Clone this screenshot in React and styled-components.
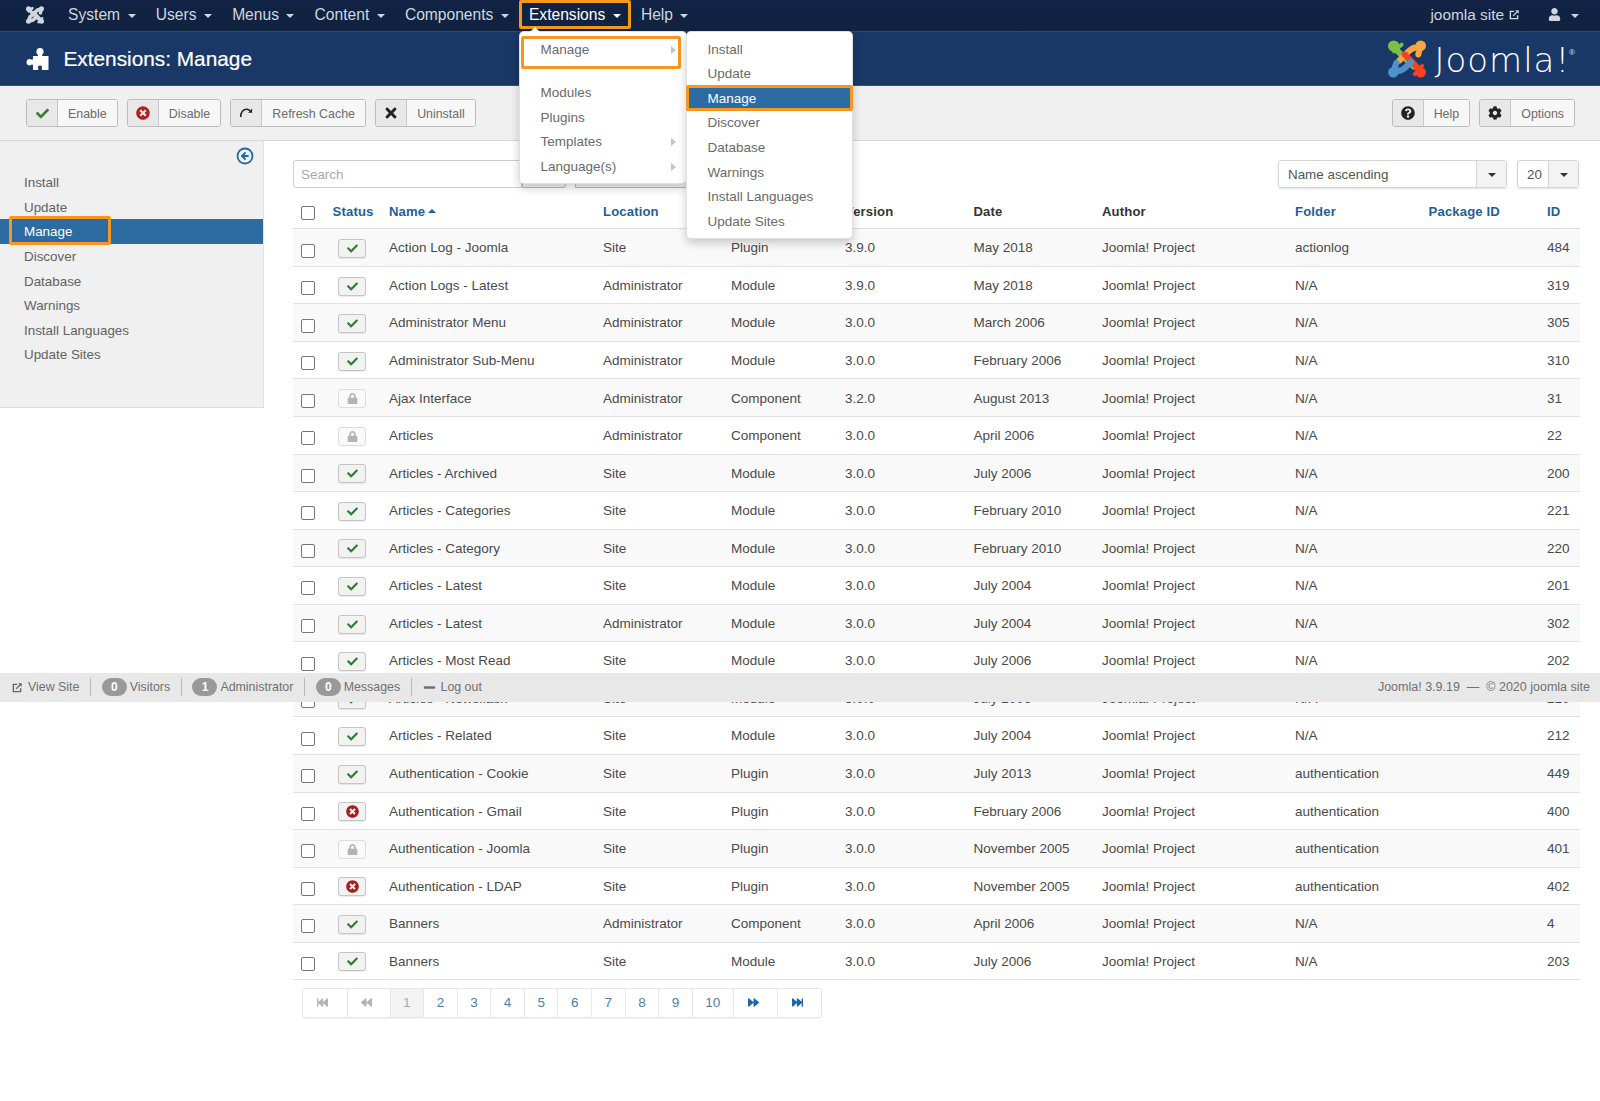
import React from "react";
import styled, { createGlobalStyle } from "styled-components";
import {
  FaCheck, FaTimesCircle, FaTimes, FaQuestionCircle, FaCog, FaUser, FaLock,
  FaFastBackward, FaBackward, FaForward, FaFastForward, FaMinus,
} from "react-icons/fa";
import { CircleArrowLeft } from "lucide-react";

const Global = createGlobalStyle`
  html, body { margin: 0; padding: 0; background: #fff; overflow: hidden; }
  body { font-family: "Liberation Sans", Arial, sans-serif; color: #4a4a4a; }
  * { box-sizing: border-box; }
`;

const ORANGE = "#f7981d";
const BLUE = "#2d6ca2";

const Page = styled.div`
  position: relative;
  width: 1600px;
  height: 1101px;
  overflow: hidden;
`;

/* ---------- top bar ---------- */
const TopBar = styled.nav`
  height: 31px;
  display: flex;
  align-items: flex-start;
  padding-left: 26px;
  background: linear-gradient(#112245, #10233f);
  color: #d0d6df;
  font-size: 15.6px;
`;
const TopLogo = styled.div`
  width: 18px;
  height: 29px;
  margin-right: 14px;
  display: flex;
  align-items: center;
`;
const TopItem = styled.div`
  height: 29px;
  display: flex;
  align-items: center;
  padding: 0 10.08px;
  color: ${(p) => (p.$on ? "#fff" : "#d0d6df")};
  box-shadow: ${(p) => (p.$on ? `inset 0 0 0 3px ${ORANGE}` : "none")};
  border-radius: 2px;
`;
const Caret = styled.span`
  display: inline-block;
  margin-left: ${(p) => p.$gap ?? 7.5}px;
  margin-top: 2px;
  border-left: 4px solid transparent;
  border-right: 4px solid transparent;
  border-top: 4px solid ${(p) => p.$color || "#d0d6df"};
`;
const TopRight = styled.div`
  margin-left: auto;
  height: 29px;
  display: flex;
  align-items: center;
  padding-right: 21px;
  font-size: 15.4px;
  svg { display: block; }
`;
const SiteLink = styled.span`
  display: flex;
  align-items: center;
  gap: 5px;
  margin-right: 28px;
`;

/* ---------- title bar ---------- */
const TitleBar = styled.header`
  height: 55px;
  display: flex;
  align-items: center;
  padding: 0 25px 0 26px;
  background: #1a3867;
  border-top: 1px solid #2d4a75;
  border-bottom: 1px solid #33507c;
  color: #fff;
`;
const Title = styled.h1`
  margin: 0 0 0 14.5px;
  font-size: 20.8px;
  font-weight: 400;
  -webkit-text-stroke: 0.2px #fff;
`;
const Brand = styled.div`
  margin-left: auto;
  display: flex;
  align-items: center;
`;
const Wordmark = styled.span`
  margin: 3px 0 0 8px;
  font-family: "DejaVu Sans", "Lato", sans-serif;
  font-weight: 200;
  font-size: 34px;
  letter-spacing: 1px;
  line-height: 1;
  color: #fff;
`;
const Registered = styled.sup`
  font-size: 8px;
  align-self: flex-start;
  margin: 8px 0 0 -1px;
  color: #dfe6ee;
`;

/* ---------- toolbar ---------- */
const Toolbar = styled.div`
  height: 55px;
  display: flex;
  align-items: flex-start;
  gap: 9.2px;
  padding: 13px 25px 0 26px;
  background: #f0f0f0;
  border-bottom: 1px solid #d8d8d8;
`;
const ToolBtn = styled.div`
  display: flex;
  height: 28px;
  border: 1px solid #bcbcbc;
  border-radius: 3px;
  overflow: hidden;
  margin-left: ${(p) => (p.$push ? "auto" : "0")};
`;
const ToolIcon = styled.span`
  width: 31px;
  display: flex;
  align-items: center;
  justify-content: center;
  background: #e8e8e8;
  border-right: 1px solid #c8c8c8;
  color: ${(p) => p.$color || "#222"};
`;
const ToolText = styled.span`
  display: flex;
  align-items: center;
  padding: 1px 10px 0;
  background: #f7f7f7;
  color: #6c6c6c;
  font-size: 12.4px;
`;

/* ---------- main ---------- */
const Main = styled.div`
  display: flex;
  align-items: flex-start;
`;
const Sidebar = styled.aside`
  position: relative;
  width: 264px;
  height: 267px;
  flex: none;
  background: #f0f0f0;
  border-right: 1px solid #e2e2e2;
  border-bottom: 1px solid #dcdcdc;
  padding-top: 29.3px;
`;
const Collapse = styled.span`
  position: absolute;
  top: 6px;
  right: 9px;
  color: #1f6aa5;
  svg { display: block; }
`;
const SideItem = styled.div`
  height: 24.6px;
  line-height: 26px;
  padding-left: 24px;
  font-size: 13.4px;
  color: ${(p) => (p.$on ? "#fff" : "#626262")};
  background: ${(p) => (p.$on ? BLUE : "transparent")};
`;
const SideMark = styled.span`
  position: absolute;
  left: 9px;
  top: 75px;
  width: 102px;
  height: 28.5px;
  border: 3px solid ${ORANGE};
  border-radius: 2px;
`;
const Content = styled.main`
  flex: 1;
  padding: 19px 20px 0 29px;
`;
const Filters = styled.div`
  display: flex;
  height: 28px;
  margin-bottom: 6px;
  padding-right: 1px;
`;
const SearchBox = styled.div`
  width: 229px;
  border: 1px solid #ccc;
  border-radius: 3px 0 0 3px;
  padding-left: 7px;
  line-height: 28px;
  font-size: 13.4px;
  color: #a9a9a9;
`;
const GhostBtn = styled.div`
  width: ${(p) => p.$w}px;
  margin-left: ${(p) => p.$gap ?? 0}px;
  border: 1px solid #bbb;
  border-radius: 0 3px 3px 0;
  background: #f5f5f5;
`;
const SelectBox = styled.div`
  display: flex;
  width: ${(p) => p.$w}px;
  margin-left: ${(p) => (p.$auto ? "auto" : "10px")};
  border: 1px solid #d4d4d4;
  border-radius: 3px;
  box-shadow: 0 1px 2px rgba(0,0,0,.12);
  font-size: 13.4px;
  color: #555;
`;
const SelectValue = styled.span`
  flex: 1;
  padding-left: ${(p) => p.$pad}px;
  line-height: 28px;
`;
const SelectArrow = styled.span`
  width: 30px;
  display: flex;
  align-items: center;
  justify-content: center;
  background: #f3f3f3;
  border-left: 1px solid #d4d4d4;
`;

const COLS = "39.6px 56.4px 214px 128px 114px 128.5px 128.5px 193px 133.6px 118.4px 33px";
const HeadRow = styled.div`
  display: grid;
  grid-template-columns: ${COLS};
  height: 35.3px;
  align-items: center;
  border-bottom: 1px solid #ddd;
  font-size: 13.1px;
  font-weight: 700;
  letter-spacing: .15px;
  color: #333;
`;
const HeadLink = styled.span`
  color: #1f5f97;
`;
const SortUp = styled.span`
  display: inline-block;
  margin-left: 3px;
  vertical-align: 3px;
  border-left: 4px solid transparent;
  border-right: 4px solid transparent;
  border-bottom: 4px solid #1f5f97;
`;
const Row = styled.div`
  display: grid;
  grid-template-columns: ${COLS};
  height: 37.55px;
  align-items: center;
  border-bottom: 1px solid #e2e2e2;
  background: ${(p) => (p.$odd ? "#f9f9f9" : "#fff")};
  font-size: 13.5px;
  color: #4a4a4a;
`;
const Cell = styled.span`
  padding-top: 0.5px;
`;
const Check = styled.input.attrs({ type: "checkbox", readOnly: true })`
  appearance: none;
  display: block;
  width: 14px;
  height: 14px;
  margin: ${(p) => (p.$head ? "3px" : "6px")} 0 0 8px;
  border: 1px solid #767676;
  border-radius: 2px;
  background: #fff;
`;
const Status = styled.span`
  width: 28px;
  height: 19px;
  margin: 2px 0 0 5.5px;
  display: flex;
  align-items: center;
  justify-content: center;
  border: 1px solid ${(p) => (p.$kind === "lock" ? "#ddd" : "#c4c4c4")};
  border-radius: 3px;
  background: ${(p) => (p.$kind === "lock" ? "#fafafa" : "#f2f2f2")};
  box-shadow: ${(p) => (p.$kind === "lock" ? "none" : "0 1px 1px rgba(0,0,0,.08)")};
  color: ${(p) => ({ ok: "#2f7d32", off: "#a51f1f", lock: "#b4b4b4" }[p.$kind])};
`;

/* ---------- pagination ---------- */
const Pager = styled.div`
  display: inline-flex;
  height: 30px;
  margin: 7.5px 0 0 9px;
  border: 1px solid #e6e6e6;
  border-radius: 3px;
  box-shadow: 0 1px 2px rgba(0,0,0,.06);
`;
const PageCell = styled.span`
  min-width: 33.6px;
  padding: 0 12.4px;
  display: flex;
  align-items: center;
  justify-content: center;
  border-left: 1px solid #e8e8e8;
  background: ${(p) => (p.$on ? "#f3f3f3" : "#fff")};
  color: ${(p) => (p.$dim ? "#a8a8a8" : "#4a80b0")};
  font-size: 13.5px;
`;
const PageArrow = styled.span`
  width: ${(p) => p.$w}px;
  padding-right: 4px;
  display: flex;
  align-items: center;
  justify-content: center;
  border-left: ${(p) => (p.$first ? "0" : "1px solid #e8e8e8")};
  color: ${(p) => (p.$dim ? "#b4b4b4" : "#1f66a6")};
`;

/* ---------- footer status ---------- */
const StatusBar = styled.footer`
  position: absolute;
  left: 0;
  right: 0;
  top: 673px;
  height: 28.5px;
  display: flex;
  align-items: center;
  padding: 0 10px;
  background: #e8e8e8;
  font-size: 12.4px;
  color: #707070;
`;
const FootItem = styled.span`
  display: flex;
  align-items: center;
  height: 18px;
  gap: ${(p) => p.$gap ?? 2.9}px;
  padding: 0 10.7px 0 ${(p) => (p.$first ? 1.5 : 10.7)}px;
  border-right: ${(p) => (p.$last ? "0" : "1px solid #bbb")};
`;
const Badge = styled.span`
  width: 25px;
  height: 18px;
  border-radius: 9px;
  background: #999;
  color: #fff;
  font-weight: 700;
  font-size: 12px;
  text-align: center;
  line-height: 18px;
`;
const FootRight = styled.span`
  margin-left: auto;
  font-size: 12.5px;
`;

/* ---------- dropdown menus ---------- */
const Menu = styled.div`
  position: absolute;
  top: 31px;
  left: ${(p) => p.$left}px;
  width: ${(p) => p.$w}px;
  padding: 5.7px 0 3.7px;
  background: #fff;
  border: 1px solid rgba(0,0,0,.12);
  border-radius: 5px;
  box-shadow: 0 4px 10px rgba(0,0,0,.2);
  font-size: 13.5px;
  color: #666;
  z-index: ${(p) => p.$z ?? 5};
`;
const MenuNotch = styled.span`
  position: absolute;
  left: 9px;
  top: -5px;
  border-left: 6px solid transparent;
  border-right: 6px solid transparent;
  border-bottom: 6px solid #fff;
`;
const MenuItem = styled.div`
  position: relative;
  height: 24.6px;
  line-height: 24.6px;
  padding-left: 20.5px;
  margin-bottom: ${(p) => (p.$sep ? 19 : 0)}px;
  color: ${(p) => (p.$on ? "#fff" : "#6a6a6a")};
  background: ${(p) => (p.$on ? BLUE : "transparent")};
`;
const SubArrow = styled.span`
  position: absolute;
  right: 10px;
  top: 8px;
  border-top: 4.5px solid transparent;
  border-bottom: 4.5px solid transparent;
  border-left: 5px solid #c4c4c4;
`;
const MenuMark = styled.span`
  position: absolute;
  left: ${(p) => p.$l}px;
  right: ${(p) => p.$r}px;
  top: ${(p) => p.$t}px;
  bottom: ${(p) => p.$b}px;
  border: 3px solid ${ORANGE};
  border-radius: 2px;
`;

/* ---------- drawings ---------- */
function JoomlaMark({ size, mono }) {
  const c = mono ? ["#d0d6df", "#d0d6df", "#d0d6df", "#d0d6df"] : ["#7ac143", "#f9a541", "#f44321", "#5091cd"];
  const w = mono ? 20 : 16;
  return (
    <svg width={size} height={size} viewBox="0 0 100 100" fill="none" strokeWidth={w} strokeLinecap="round" strokeLinejoin="round">
      <circle cx="15" cy="16" r="15" fill={c[0]} />
      <path d="M18 22 L68 70" stroke={c[0]} />
      <path d="M16 30 L36 12" stroke={c[0]} strokeWidth={w - 6} />
      <circle cx="86" cy="15" r="14" fill={c[1]} />
      <path d="M84 18 L80 38 M82 22 C70 16 62 22 54 30 L30 54" stroke={c[1]} />
      <circle cx="86" cy="85" r="14" fill={c[2]} />
      <path d="M84 80 L44 38" stroke={c[2]} />
      <path d="M90 68 L70 90" stroke={c[2]} strokeWidth={w - 6} />
      <circle cx="14" cy="85" r="14" fill={c[3]} />
      <path d="M18 80 C30 84 38 80 46 72 L60 58 M16 78 L22 60" stroke={c[3]} />
    </svg>
  );
}
const PuzzleIcon = () => (
  <svg width="23" height="24" viewBox="0 0 23 24" fill="#fff">
    <path d="M7 9 H11 C12 9 12.2 8.2 11.6 7.4 C10.6 6.2 10.4 5.4 10.4 4.4 C10.4 2.2 12 1 14 1 C16 1 17.6 2.2 17.6 4.4 C17.6 5.4 17.4 6.2 16.4 7.4 C15.8 8.2 16 9 17 9 H22.5 V23 H16.5 C15.6 23 15.4 22.2 15.8 21.5 C16.3 20.6 16 18.6 14 18.6 C12 18.6 11.7 20.6 12.2 21.5 C12.6 22.2 12.4 23 11.5 23 H7 V18.4 C7 17.6 6.2 17.3 5.4 17.8 C4.6 18.3 3.8 18.6 3 18.4 C1.2 18 .5 16.4 .5 15.2 C.5 14 1.2 12.4 3 12 C3.8 11.8 4.6 12.1 5.4 12.6 C6.2 13.1 7 12.8 7 12 Z" />
  </svg>
);
const RefreshIcon = () => (
  <svg width="14" height="14" viewBox="0 0 16 16" fill="none">
    <path d="M2 12.5 C1.6 7 5 3.4 9 3.6 C10.6 3.7 11.8 4.4 12.8 5.4" stroke="#222" strokeWidth="1.7" />
    <path d="M15 2.8 L15 7.6 L10.4 7.6 Z" fill="#222" />
  </svg>
);
const ExtIcon = ({ size, color }) => (
  <svg width={size} height={size} viewBox="0 0 16 16" fill="none" stroke={color} strokeWidth="2">
    <path d="M12.5 9 V14 H2 V3.5 H7.5" />
    <path d="M6 10 L13 3" />
    <path d="M9.2 1.8 H14.2 V6.8 Z" fill={color} stroke="none" />
  </svg>
);

const ROWS = [
  ["Action Log - Joomla", "Site", "Plugin", "3.9.0", "May 2018", "actionlog", "484", "ok"],
  ["Action Logs - Latest", "Administrator", "Module", "3.9.0", "May 2018", "N/A", "319", "ok"],
  ["Administrator Menu", "Administrator", "Module", "3.0.0", "March 2006", "N/A", "305", "ok"],
  ["Administrator Sub-Menu", "Administrator", "Module", "3.0.0", "February 2006", "N/A", "310", "ok"],
  ["Ajax Interface", "Administrator", "Component", "3.2.0", "August 2013", "N/A", "31", "lock"],
  ["Articles", "Administrator", "Component", "3.0.0", "April 2006", "N/A", "22", "lock"],
  ["Articles - Archived", "Site", "Module", "3.0.0", "July 2006", "N/A", "200", "ok"],
  ["Articles - Categories", "Site", "Module", "3.0.0", "February 2010", "N/A", "221", "ok"],
  ["Articles - Category", "Site", "Module", "3.0.0", "February 2010", "N/A", "220", "ok"],
  ["Articles - Latest", "Site", "Module", "3.0.0", "July 2004", "N/A", "201", "ok"],
  ["Articles - Latest", "Administrator", "Module", "3.0.0", "July 2004", "N/A", "302", "ok"],
  ["Articles - Most Read", "Site", "Module", "3.0.0", "July 2006", "N/A", "202", "ok"],
  ["Articles - Newsflash", "Site", "Module", "3.0.0", "July 2006", "N/A", "210", "ok"],
  ["Articles - Related", "Site", "Module", "3.0.0", "July 2004", "N/A", "212", "ok"],
  ["Authentication - Cookie", "Site", "Plugin", "3.0.0", "July 2013", "authentication", "449", "ok"],
  ["Authentication - Gmail", "Site", "Plugin", "3.0.0", "February 2006", "authentication", "400", "off"],
  ["Authentication - Joomla", "Site", "Plugin", "3.0.0", "November 2005", "authentication", "401", "lock"],
  ["Authentication - LDAP", "Site", "Plugin", "3.0.0", "November 2005", "authentication", "402", "off"],
  ["Banners", "Administrator", "Component", "3.0.0", "April 2006", "N/A", "4", "ok"],
  ["Banners", "Site", "Module", "3.0.0", "July 2006", "N/A", "203", "ok"],
];
const StatusIcon = ({ kind }) =>
  kind === "ok" ? <FaCheck size={11} /> : kind === "off" ? <FaTimesCircle size={13} /> : <FaLock size={11} />;

const NAV = ["System", "Users", "Menus", "Content", "Components", "Extensions", "Help"];
const SIDE = ["Install", "Update", "Manage", "Discover", "Database", "Warnings", "Install Languages", "Update Sites"];

export default function App() {
  return (
    <Page>
      <Global />
      <TopBar>
        <TopLogo><JoomlaMark size={18} mono /></TopLogo>
        {NAV.map((n) => (
          <TopItem key={n} $on={n === "Extensions"}>
            {n}
            <Caret $color={n === "Extensions" ? "#fff" : undefined} />
          </TopItem>
        ))}
        <TopRight>
          <SiteLink>joomla site <ExtIcon size={11} color="#d0d6df" /></SiteLink>
          <FaUser size={13} />
          <Caret $gap={10} />
        </TopRight>
      </TopBar>

      <TitleBar>
        <PuzzleIcon />
        <Title>Extensions: Manage</Title>
        <Brand>
          <JoomlaMark size={38} />
          <Wordmark>Joomla!</Wordmark>
          <Registered>®</Registered>
        </Brand>
      </TitleBar>

      <Toolbar>
        <ToolBtn><ToolIcon $color="#378137"><FaCheck size={13} /></ToolIcon><ToolText>Enable</ToolText></ToolBtn>
        <ToolBtn><ToolIcon $color="#b3201e"><FaTimesCircle size={14} /></ToolIcon><ToolText>Disable</ToolText></ToolBtn>
        <ToolBtn><ToolIcon><RefreshIcon /></ToolIcon><ToolText>Refresh Cache</ToolText></ToolBtn>
        <ToolBtn><ToolIcon><FaTimes size={16} /></ToolIcon><ToolText>Uninstall</ToolText></ToolBtn>
        <ToolBtn $push><ToolIcon><FaQuestionCircle size={14} /></ToolIcon><ToolText>Help</ToolText></ToolBtn>
        <ToolBtn><ToolIcon><FaCog size={14} /></ToolIcon><ToolText>Options</ToolText></ToolBtn>
      </Toolbar>

      <Main>
        <Sidebar>
          <Collapse><CircleArrowLeft size={18} strokeWidth={2.4} /></Collapse>
          {SIDE.map((s) => <SideItem key={s} $on={s === "Manage"}>{s}</SideItem>)}
          <SideMark />
        </Sidebar>

        <Content>
          <Filters>
            <SearchBox>Search</SearchBox>
            <GhostBtn $w={44} />
            <GhostBtn $w={125} $gap={9} />
            <SelectBox $w={229} $auto>
              <SelectValue $pad={9}>Name ascending</SelectValue>
              <SelectArrow><Caret $gap={0} $color="#333" /></SelectArrow>
            </SelectBox>
            <SelectBox $w={62}>
              <SelectValue $pad={9}>20</SelectValue>
              <SelectArrow><Caret $gap={0} $color="#333" /></SelectArrow>
            </SelectBox>
          </Filters>

          <HeadRow>
            <Check $head />
            <HeadLink>Status</HeadLink>
            <HeadLink>Name<SortUp /></HeadLink>
            <HeadLink>Location</HeadLink>
            <span>Type</span>
            <span>Version</span>
            <span>Date</span>
            <span>Author</span>
            <HeadLink>Folder</HeadLink>
            <HeadLink>Package ID</HeadLink>
            <HeadLink>ID</HeadLink>
          </HeadRow>
          {ROWS.map((r, i) => (
            <Row key={i} $odd={i % 2 === 0}>
              <Check />
              <Status $kind={r[7]}><StatusIcon kind={r[7]} /></Status>
              <Cell>{r[0]}</Cell>
              <Cell>{r[1]}</Cell>
              <Cell>{r[2]}</Cell>
              <Cell>{r[3]}</Cell>
              <Cell>{r[4]}</Cell>
              <Cell>Joomla! Project</Cell>
              <Cell>{r[5]}</Cell>
              <Cell />
              <Cell>{r[6]}</Cell>
            </Row>
          ))}
          <Pager>
            <PageArrow $w={43.5} $dim $first><FaFastBackward size={11} /></PageArrow>
            <PageArrow $w={43} $dim><FaBackward size={11} /></PageArrow>
            <PageCell $on $dim>1</PageCell>
            {[2, 3, 4, 5, 6, 7, 8, 9, 10].map((n) => <PageCell key={n}>{n}</PageCell>)}
            <PageArrow $w={44}><FaForward size={11} /></PageArrow>
            <PageArrow $w={44}><FaFastForward size={11} /></PageArrow>
          </Pager>
        </Content>
      </Main>

      <StatusBar>
        <FootItem $first $gap={5.5}><ExtIcon size={11} color="#666" />View Site</FootItem>
        <FootItem><Badge>0</Badge>Visitors</FootItem>
        <FootItem><Badge>1</Badge>Administrator</FootItem>
        <FootItem><Badge>0</Badge>Messages</FootItem>
        <FootItem $last $gap={5}><FaMinus size={13} />Log out</FootItem>
        <FootRight>Joomla! 3.9.19 &nbsp;—&nbsp; © 2020 joomla site</FootRight>
      </StatusBar>

      <Menu $left={519} $w={168}>
        <MenuNotch />
        <MenuItem $sep>Manage<SubArrow /><MenuMark $l={1} $r={5} $t={-2} $b={-7} /></MenuItem>
        <MenuItem>Modules</MenuItem>
        <MenuItem>Plugins</MenuItem>
        <MenuItem>Templates<SubArrow /></MenuItem>
        <MenuItem>Language(s)<SubArrow /></MenuItem>
      </Menu>
      <Menu $left={686} $w={167} $z={6}>
        {SIDE.map((s) => (
          <MenuItem key={s} $on={s === "Manage"}>
            {s}
            {s === "Manage" && <MenuMark $l={-1} $r={-1} $t={-2} $b={0} />}
          </MenuItem>
        ))}
      </Menu>
    </Page>
  );
}
